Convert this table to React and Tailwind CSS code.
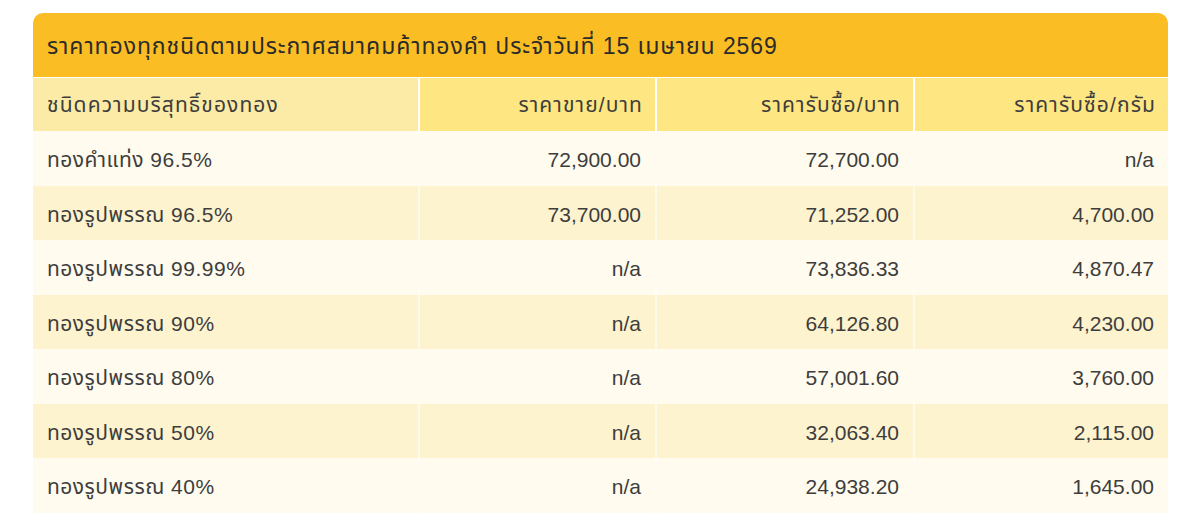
const HEADERS = ["ชนิดความบริสุทธิ์ของทอง", "ราคาขาย/บาท", "ราคารับซื้อ/บาท", "ราคารับซื้อ/กรัม"];

const ROWS = [
  ["ทองคำแท่ง 96.5%", "72,900.00", "72,700.00", "n/a"],
  ["ทองรูปพรรณ 96.5%", "73,700.00", "71,252.00", "4,700.00"],
  ["ทองรูปพรรณ 99.99%", "n/a", "73,836.33", "4,870.47"],
  ["ทองรูปพรรณ 90%", "n/a", "64,126.80", "4,230.00"],
  ["ทองรูปพรรณ 80%", "n/a", "57,001.60", "3,760.00"],
  ["ทองรูปพรรณ 50%", "n/a", "32,063.40", "2,115.00"],
  ["ทองรูปพรรณ 40%", "n/a", "24,938.20", "1,645.00"],
];

const COLS = "grid grid-cols-[385px_235px_256px_253px] gap-x-[2px]";

export default function App() {
  return (
    <div className="h-[528px] w-[1200px] bg-white pt-[13px] pl-[33px] font-['Liberation_Sans','Noto_Sans_Thai','Noto_Sans',sans-serif] text-[#3d3d3d]">
      <div className="w-[1135px]">
        {/* title bar */}
        <div className="flex h-[64px] items-center rounded-t-[10px] bg-[#fbbd24] px-3.5 pt-[2px] text-[23px] tracking-[0.9px] text-[#2b2b2b]">
          ราคาทองทุกชนิดตามประกาศสมาคมค้าทองคำ ประจำวันที่ 15 เมษายน 2569
        </div>

        {/* column headers */}
        <div className={`${COLS} mt-[1px] bg-white text-[21px] tracking-[1.1px]`}>
          {HEADERS.map((h, i) => (
            <div
              key={h}
              className={`flex h-[53px] items-center pl-3.5 ${i === 0 ? "bg-[#fbeba6] justify-start" : "bg-[#fee682] justify-end pr-3"}`}
            >
              {h}
            </div>
          ))}
        </div>

        {ROWS.map((r, ri) => (
          <div key={r[0]} className={`${COLS} ${ri % 2 === 0 ? "bg-[#fffdf3]" : "bg-[#fefaea]"}`}>
            {r.map((c, ci) => (
              <div
                key={ci}
                className={`flex h-[54.5px] items-center px-3.5 pt-[3px] text-[21px] ${ri % 2 === 0 ? "bg-[#fffbee]" : "bg-[#fdf3cf]"} ${ci === 0 ? "justify-start tracking-[0.5px]" : "justify-end"}`}
              >
                {c}
              </div>
            ))}
          </div>
        ))}
      </div>
    </div>
  );
}
